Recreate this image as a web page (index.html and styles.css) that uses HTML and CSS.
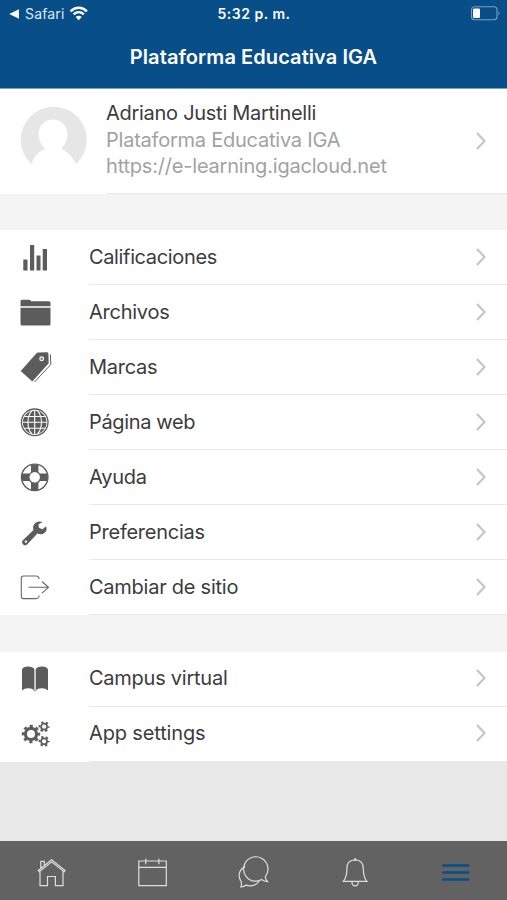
FILE: index.html
```html
<!DOCTYPE html>
<html lang="es">
<head>
<meta charset="utf-8">
<title>Plataforma Educativa IGA</title>
<link rel="stylesheet" href="styles.css">
</head>
<body>
<svg width="0" height="0" class="defs"><defs>
<symbol id="chev" viewBox="0 0 12 20"><path d="M2 2l7.500 8L2 18" fill="none" stroke="#c5c5c5" stroke-width="2.1"/></symbol>
</defs></svg>
<div class="app">
<header class="top">
  <div class="status">
    <div class="back"><svg width="11" height="10" viewBox="0 0 11 10"><path d="M.2 5L10 .3v9.400z" fill="#fff"/></svg><span class="safari">Safari</span><svg class="wifi" width="20" height="15" viewBox="0 0 20 15"><g fill="none" stroke="#fff" stroke-width="2.5"><path d="M1.500 5.300C6.200.7 13.200.7 17.900 5.300"/><path d="M4.600 8.400c3-2.800 7.200-2.800 10.200 0"/></g><path d="M6.700 11q3-2.500 6 0l-3 3.200z" fill="#fff"/></svg></div>
    <span class="time">5:32 p. m.</span>
    <svg class="battery" width="31" height="15" viewBox="0 0 31 15"><rect x="1.500" y=".8" width="25.500" height="13" rx="3" fill="none" stroke="#7e9fbe" stroke-width="1.100"/><rect x="3" y="2.500" width="7" height="9.500" rx="1.300" fill="#fff"/><path d="M28.500 5q2 2.300 0 4.600z" fill="#7e9fbe"/></svg>
  </div>
  <h1>Plataforma Educativa IGA</h1>
</header>
<main>
  <section class="profile">
    <svg class="avatar" width="68" height="68" viewBox="0 0 68 68"><path d="M12.500 56A33 33 0 1 1 57 56Q52 45 42 40.500C45 38 48.500 32 48.500 26a14.500 14.500 0 0 0-29 0c0 6 3 12 7 15Q16 44 12.500 56z" fill="#e6e6e6"/></svg>
    <div class="who"><div class="lines"><p class="name">Adriano Justi Martinelli</p><p class="site">Plataforma Educativa IGA</p><p class="url">https://e-learning.igacloud.net</p></div><svg class="chev"><use href="#chev"/></svg></div>
  </section>
  <ul class="list">
    <li><svg class="ic" viewBox="0 0 35 35"><path d="M5.300 19.500h4.200v11H5.300zM12 5h4.200v25.500H12zM18.500 15.500h4v15h-4zM24.700 9H29v21.500h-4.300z"/></svg><div class="row wide"><span>Calificaciones</span><svg class="chev"><use href="#chev"/></svg></div></li>
    <li><svg class="ic" viewBox="0 0 35 35"><path d="M2.500 11.200V6.200q0-1.500 1.500-1.500h7.500q1 0 1.500 1.600h18q1.500 0 1.500 1.500v3.400zM2.500 12.700h30V29q0 1.500-1.500 1.500H4q-1.500 0-1.500-1.500z"/></svg><div class="row"><span>Archivos</span><svg class="chev"><use href="#chev"/></svg></div></li>
    <li><svg class="ic" viewBox="0 0 35 35"><path d="M2.700 21L18.300 3.600q.8-1 2-1.100l8.700-.3q1.300 0 1.400 1.300l.3 9.800L14.300 31.500z"/><path d="M32.400 4.500l.4 10L16.500 32" fill="none" stroke="#5c5c5c"/><circle cx="23.700" cy="8.800" r="1.900" fill="#888" stroke="#fff" stroke-width="1.100"/></svg><div class="row"><span>Marcas</span><svg class="chev"><use href="#chev"/></svg></div></li>
    <li><svg class="ic" viewBox="0 0 35 35"><circle cx="16.700" cy="17.300" r="11.800"/><g fill="none" stroke="#fff" stroke-width="1.100"><path d="M16.700 5v25M4.500 17.300h25M6 11.500h22M6 23.200h22"/><ellipse cx="16.700" cy="17.300" rx="6.800" ry="12.500"/></g><circle cx="16.700" cy="17.300" r="13.300" fill="none" stroke="#5c5c5c" stroke-width="1.300"/></svg><div class="row wide"><span>Página web</span><svg class="chev"><use href="#chev"/></svg></div></li>
    <li><svg class="ic" viewBox="0 0 35 35"><circle cx="16.700" cy="17.300" r="13.200" fill="#fff" stroke="#5c5c5c" stroke-width="1.400"/><path d="M13 4.500h7.400v8H13zM13 22h7.400v8H13zM4 13.600h8v7.400H4zM21.500 13.600h8v7.400h-8z"/><circle cx="16.700" cy="17.300" r="5.900" fill="#fff" stroke="#5c5c5c" stroke-width="1.300"/></svg><div class="row"><span>Ayuda</span><svg class="chev"><use href="#chev"/></svg></div></li>
    <li><svg class="ic" viewBox="0 0 35 35"><path d="M25.500 6.200c-4-1.400-8.300 0-9.400 4.200-.4 1.400-.2 2.700.2 3.900L5.900 24.300c-1.500 1.400-1.400 3 .1 4.400 1.500 1.300 3 1.200 4.400-.3l9.800-10.500c4 1.600 8 .2 9.200-3.800-.0-1.200 0-2.200-.7-3.200l-3.500 2.700-3.600-1.500-.2-3.600z" transform="translate(-.8 .7)"/><circle cx="7.900" cy="26.600" r="1.200" fill="#fff"/></svg><div class="row"><span>Preferencias</span><svg class="chev"><use href="#chev"/></svg></div></li>
    <li><svg class="ic" viewBox="0 0 35 35"><path d="M21 9V8q-.8-2-3-2H5.500Q3.300 6 3.300 8.200v18.200q0 2.200 2.200 2.200H18q2.200 0 3-2v-1M10.500 17.300h20M24 11.500l6.500 5.800-6.500 5.900" fill="none" stroke="#666" stroke-width="1.100"/></svg><div class="row"><span>Cambiar de sitio</span><svg class="chev"><use href="#chev"/></svg></div></li>
  </ul>
  <ul class="list second">
    <li><svg class="ic" viewBox="0 0 35 35"><path d="M4 7.500Q5 4.500 10 4.500t6.400 2.800v21.200Q14 26 10 26.300q-3.500 0-6 2.200zM17.700 7.300q1.500-2.800 6.300-2.800t6 3v21q-2.500-2.200-6-2.200-4-.3-6.300 2.200z"/><path d="M15.500 28l1.500 1.300 1.500-1.300" fill="none" stroke="#777" stroke-width=".8"/></svg><div class="row"><span>Campus virtual</span><svg class="chev"><use href="#chev"/></svg></div></li>
    <li><svg class="ic" viewBox="0 0 35 35"><g fill="none" stroke="#5c5c5c"><circle cx="13" cy="17" r="5.600" stroke-width="3.200"/><circle cx="13" cy="17" r="8" stroke-width="2.400" stroke-dasharray="3.142 3.142" stroke-dashoffset="1.571"/><circle cx="26.100" cy="9.700" r="3" stroke-width="1.700"/><circle cx="26.100" cy="9.700" r="4.500" stroke-width="2" stroke-dasharray="2.200 2.512" stroke-dashoffset="1.100"/><circle cx="26.100" cy="24.300" r="3" stroke-width="1.700"/><circle cx="26.100" cy="24.300" r="4.500" stroke-width="2" stroke-dasharray="2.200 2.512" stroke-dashoffset="1.100"/></g></svg><div class="row narrow"><span>App settings</span><svg class="chev"><use href="#chev"/></svg></div></li>
  </ul>
</main>
<nav class="tabs">
  <a><svg viewBox="0 0 34 34"><path d="M6 15v14.700h7.500v-9.200h7.900v9.200H29V15M4.300 14.500L17.600 3.800l13.500 10.700-1 1.200L17.600 5.900 5.300 15.700zM6.800 12V5.300h3.500v3.800"/></svg></a>
  <a><svg viewBox="0 0 34 34"><path d="M3.800 5h27.500v24.700H3.800zM3.800 11.300h27.500M10.800 2.700v5.600M23.900 2.700v5.600"/></svg></a>
  <a><svg viewBox="0 0 34 34"><path d="M28.200 20.800A12.200 12.200 0 1 0 18 25.200q3.500.2 6.500-1.800 2.500 1.900 6 2.200-2-2-2.300-4.800zM8.200 10.600C2 13.500.3 20 4.200 25.600 4.700 27.500 4.500 29 4 31q3-.3 4.800-1.800c5.500 1.600 10.800 0 13.600-4.400"/></svg></a>
  <a><svg viewBox="0 0 34 34"><path d="M17.100 4c-5.800 0-8.200 3.600-8.200 8.500 0 7-.9 9.700-3.600 12.900h23.600c-2.700-3.200-3.600-5.900-3.600-12.900 0-4.900-2.400-8.500-8.200-8.500zM13.900 26c.2 5.200 6.200 5.200 6.400 0"/><circle cx="17.100" cy="3.600" r=".8"/></svg></a>
  <a class="active"><svg viewBox="0 0 34 34"><path d="M4.300 9.400h25M4.300 16.500h25M4.300 23.400h25"/></svg></a>
</nav>
</div>
</body>
</html>
```
FILE: styles.css
```css
* { box-sizing: border-box; }
body, h1, p, ul { margin: 0; padding: 0; }
body { font-family: Inter, "Liberation Sans", sans-serif; color: #3c3c3c; background: #e8e8e8; }
svg { display: block; flex: none; }
.defs { display: none; }
.app { height: 900px; display: flex; flex-direction: column; overflow: hidden; }
.top { height: 89px; background: #084e88; color: #fff; border-bottom: 1px solid #7da3c3; }
.status { height: 27px; display: grid; grid-template-columns: 1fr auto 1fr; align-items: center; padding: 0 6px 0 9px; }
.back { display: flex; align-items: center; }
.safari { font-size: 14px; margin: 0 5px 0 5px; color: #dce8f4; letter-spacing: .15px; }
.wifi { margin-top: -1px; }
.time { font-size: 14px; font-weight: 600; letter-spacing: .5px; margin-left: -2px; }
.battery { justify-self: end; }
h1 { font-size: 20px; font-weight: 600; line-height: 60px; text-align: center; letter-spacing: .08px; }
main { flex: 1; background: #e8e8e8; }
.profile { height: 105px; background: #fff; display: flex; }
.avatar { margin: 19px 0 0 19px; overflow: visible; }
.who { margin-left: 19px; flex: 1; display: flex; justify-content: space-between; border-bottom: 1px solid #e8e8e8; padding-right: 20px; }
.lines { padding-top: 11px; font-size: 20px; white-space: nowrap; }
.lines p { line-height: 26px; color: #a2a2a2; letter-spacing: -.23px; }
.lines .name { color: #3c3c3c; line-height: 27px; letter-spacing: -.28px; }
.lines .url { letter-spacing: -.2px; }
.chev { width: 12px; height: 20px; }
.who .chev { margin-top: 42px; }
.list { list-style: none; border-top: 36px solid #f4f4f4; background: #fff; }
.second { border-top-width: 37px; }
.list li { height: 55px; display: flex; }
.ic { width: 35px; height: 35px; margin: 10px 0 0 18px; fill: #5c5c5c; }
.row { flex: 1; margin-left: 36px; padding: 0 20px 1px 0; border-bottom: 1px solid #e8e8e8; display: flex; align-items: center; justify-content: space-between; font-size: 20px; letter-spacing: -.25px; }
.row.wide { letter-spacing: -.36px; }
.row.narrow { letter-spacing: -.15px; }
.second .row { padding-bottom: 2px; }
.tabs { height: 59px; background: #626262; display: flex; }
.tabs a { flex: 1; display: flex; justify-content: center; padding-top: 15px; }
.tabs svg { width: 34px; height: 34px; fill: none; stroke: #dedede; stroke-width: 1.2; }
.tabs .active svg { stroke: #084e88; stroke-width: 2.5; stroke-linecap: round; }
```
